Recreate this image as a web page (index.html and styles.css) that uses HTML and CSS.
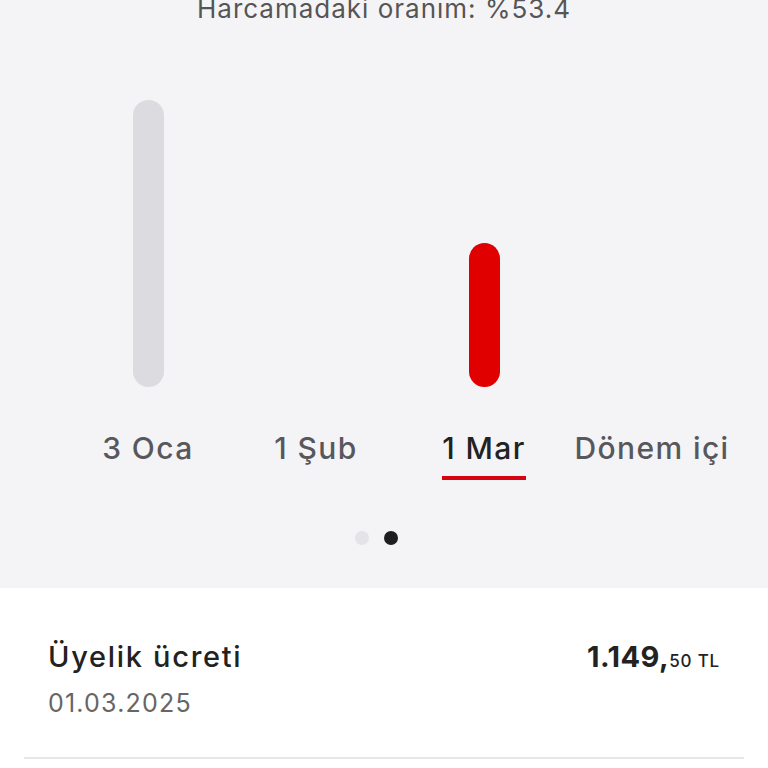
FILE: index.html
```html
<!DOCTYPE html>
<html lang="tr">
<head>
    <meta charset="UTF-8">
    <meta name="viewport" content="width=device-width, initial-scale=1.0">
    <title>Harcamalar</title>
    <link rel="stylesheet" href="styles.css">
</head>
<body>
    <div class="summary">
        <div class="ratio">Harcamadaki oranım: %53.4</div>

        <div class="chart">
            <div class="col">
                <div class="slot"><div class="bar" style="height: 287px"></div></div>
                <div class="label">3 Oca</div>
            </div>
            <div class="col">
                <div class="slot"></div>
                <div class="label">1 Şub</div>
            </div>
            <div class="col active">
                <div class="slot"><div class="bar" style="height: 144px"></div></div>
                <div class="label">1 Mar</div>
            </div>
            <div class="col">
                <div class="slot"></div>
                <div class="label">Dönem içi</div>
            </div>
        </div>

        <div class="dots">
            <span class="dot"></span>
            <span class="dot current"></span>
        </div>
    </div>

    <div class="list">
        <div class="item">
            <div class="item-info">
                <div class="item-title">Üyelik ücreti</div>
                <div class="item-date">01.03.2025</div>
            </div>
            <div class="item-amount">1.149,<span class="cents">50 TL</span></div>
        </div>
    </div>
</body>
</html>
```

FILE: styles.css
```css
body {
    margin: 0;
    font-family: Inter, "Noto Sans", sans-serif;
    background-color: #ffffff;
    color: #222;
}
.summary {
    background-color: #f4f4f7;
    height: 588px;
    overflow: hidden;
}
.ratio {
    font-size: 26px;
    line-height: 26px;
    letter-spacing: 1px;
    color: #555;
    text-align: center;
    margin-top: -4px;
}
.chart {
    display: grid;
    grid-template-columns: repeat(4, 168px);
    padding-left: 64px;
    margin-top: 78px;
}
.col {
    display: flex;
    flex-direction: column;
    align-items: center;
}
.slot {
    height: 287px;
    display: flex;
    align-items: flex-end;
    justify-content: center;
}
.bar {
    width: 31px;
    border-radius: 16px;
    background-color: #dcdbe0;
}
.active .bar {
    background-color: #e00000;
}
.label {
    margin-top: 42px;
    font-size: 30px;
    line-height: 38px;
    letter-spacing: 1.4px;
    font-weight: 500;
    color: #58585c;
    padding-bottom: 9px;
    border-bottom: 4px solid transparent;
}
.active .label {
    color: #222;
    border-bottom-color: #d40511;
}
.dots {
    display: flex;
    justify-content: center;
    gap: 15px;
    margin-top: 51px;
    padding-right: 15px;
}
.dot {
    width: 14px;
    height: 14px;
    border-radius: 50%;
    background-color: #e4e4e8;
}
.dot.current {
    background-color: #1e1e1e;
}
.list {
    padding: 0 24px;
}
.item {
    display: flex;
    justify-content: space-between;
    align-items: flex-start;
    padding: 51px 24px 37px;
    border-bottom: 2px solid #e6e6e8;
}
.item-title {
    font-size: 29px;
    line-height: 36px;
    letter-spacing: 1.7px;
    font-weight: 500;
    color: #222;
}
.item-date {
    font-size: 25px;
    line-height: 34px;
    letter-spacing: 1.2px;
    color: #666;
    margin-top: 11px;
}
.item-amount {
    font-size: 29px;
    line-height: 36px;
    letter-spacing: 0.5px;
    font-weight: 700;
    color: #222;
}
.cents {
    font-size: 17px;
    font-weight: 500;
    letter-spacing: 0.8px;
}
```
